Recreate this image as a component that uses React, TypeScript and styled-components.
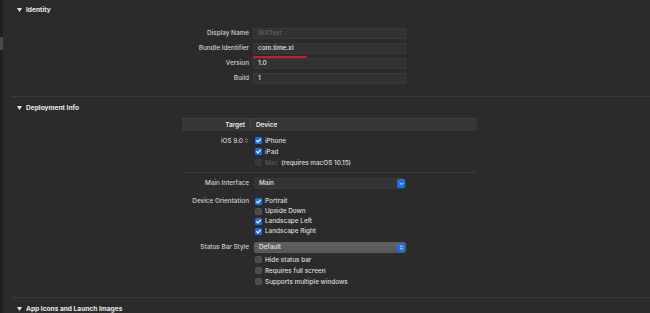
import styled, { createGlobalStyle } from 'styled-components';

const GlobalStyle = createGlobalStyle`
  html, body {
    margin: 0;
    padding: 0;
    background: #2b2b2b;
  }
  body {
    font-family: Inter, "Liberation Sans", sans-serif;
    font-size: 6.4px;
    color: #d6d6d6;
  }
`;

type CheckItem = { label: string; checked?: boolean; disabled?: boolean; note?: string };

const iosDevices: CheckItem[] = [
  { label: 'iPhone', checked: true },
  { label: 'iPad', checked: true },
  { label: 'Mac', disabled: true, note: '(requires macOS 10.15)' },
];

const orientations: CheckItem[] = [
  { label: 'Portrait', checked: true },
  { label: 'Upside Down' },
  { label: 'Landscape Left', checked: true },
  { label: 'Landscape Right', checked: true },
];

const statusBarOptions: CheckItem[] = [
  { label: 'Hide status bar' },
  { label: 'Requires full screen' },
  { label: 'Supports multiple windows' },
];

const Disclosure = () => (
  <svg width="5" height="4" viewBox="0 0 10 8">
    <polygon points="0,0 10,0 5,8" fill="#e4e4e4" />
  </svg>
);

const Tick = () => (
  <svg width="7" height="7" viewBox="0 0 7 7">
    <path d="M1.6 3.6 L2.9 4.9 L5.4 2.1" stroke="#fff" strokeWidth="1.1" fill="none" strokeLinecap="round" strokeLinejoin="round" />
  </svg>
);

const ChevronDown = () => (
  <svg width="5" height="4" viewBox="0 0 5 4">
    <path d="M1 1.2 L2.5 2.7 L4 1.2" stroke="#fff" strokeWidth="0.9" fill="none" strokeLinecap="round" />
  </svg>
);

const Stepper = ({ color = '#fff' }: { color?: string }) => (
  <svg width="5" height="7" viewBox="0 0 5 7">
    <path d="M1.3 2.8 L2.5 1.6 L3.7 2.8 M1.3 4.2 L2.5 5.4 L3.7 4.2" stroke={color} strokeWidth="0.8" fill="none" strokeLinecap="round" />
  </svg>
);

const Checks: React.FC<{ items: CheckItem[]; rowHeight: number }> = ({ items, rowHeight }) => (
  <CheckStack>
    {items.map((item) => (
      <CheckRow key={item.label} $h={rowHeight}>
        <CheckBox $checked={!!item.checked} $disabled={!!item.disabled}>
          {item.checked && <Tick />}
        </CheckBox>
        <CheckLabel $disabled={!!item.disabled}>{item.label}</CheckLabel>
        {item.note && <CheckLabel>{item.note}</CheckLabel>}
      </CheckRow>
    ))}
  </CheckStack>
);

export default function App() {
  return (
    <>
      <GlobalStyle />
      <Page>
        <Rail>
          <RailKnob />
        </Rail>
        <Content>
          <SectionHeader $first>
            <Disclosure />
            Identity
          </SectionHeader>
          <IdentityGrid>
            <Label>Display Name</Label>
            <TextField $dim>WXTest</TextField>
            <Label>Bundle Identifier</Label>
            <TextField>
              com.time.xl
              <Underline />
            </TextField>
            <Label>Version</Label>
            <TextField>1.0</TextField>
            <Label>Build</Label>
            <TextField>1</TextField>
          </IdentityGrid>
          <Divider />

          <SectionHeader>
            <Disclosure />
            Deployment Info
          </SectionHeader>
          <TargetTable>
            <TableHead>
              <HeadCell $label>Target</HeadCell>
              <HeadCell>Device</HeadCell>
            </TableHead>
            <TableBody>
              <BodyLabel>
                iOS 9.0
                <Stepper color="#9a9a9a" />
              </BodyLabel>
              <DeviceCell>
                <Checks items={iosDevices} rowHeight={11} />
              </DeviceCell>
            </TableBody>
          </TargetTable>

          <FormRow $top={5}>
            <Label>Main Interface</Label>
            <PopUp>
              <PopUpText>Main</PopUpText>
              <PopUpButton>
                <ChevronDown />
              </PopUpButton>
            </PopUp>
          </FormRow>
          <FormRow $top={7}>
            <Label $line={10}>Device Orientation</Label>
            <Checks items={orientations} rowHeight={10} />
          </FormRow>
          <FormRow $top={6} $bottom={10}>
            <Label>Status Bar Style</Label>
            <div>
              <PopUp $raised>
                <PopUpText>Default</PopUpText>
                <PopUpButton>
                  <Stepper />
                </PopUpButton>
              </PopUp>
              <Spacer />
              <Checks items={statusBarOptions} rowHeight={11} />
            </div>
          </FormRow>
          <Divider />

          <SectionHeader>
            <Disclosure />
            App Icons and Launch Images
          </SectionHeader>
        </Content>
      </Page>
    </>
  );
}

const Page = styled.div`
  display: flex;
  width: 650px;
  height: 313px;
  overflow: hidden;
  background: #2b2b2b;
`;

const Rail = styled.div`
  flex: none;
  width: 3px;
  background: #1f1f1f;
  display: flex;
  flex-direction: column;
`;

const RailKnob = styled.div`
  margin-top: 37px;
  height: 13px;
  background: #4a4a4a;
`;

const Content = styled.div`
  flex: 1;
  display: flex;
  flex-direction: column;
`;

const SectionHeader = styled.div<{ $first?: boolean }>`
  flex: none;
  display: flex;
  align-items: center;
  gap: 4px;
  height: ${(p) => (p.$first ? 19 : 21)}px;
  padding-left: 14px;
  font-size: 6.6px;
  font-weight: 700;
  color: #e8e8e8;
`;

const Divider = styled.div`
  flex: none;
  height: 1px;
  margin-left: 9px;
  background: #3a3a3a;
`;

const IdentityGrid = styled.div`
  display: grid;
  grid-template-columns: 246px 153px;
  grid-auto-rows: 11px;
  column-gap: 4px;
  row-gap: 4px;
  align-items: center;
  padding: 9px 0 12px;
`;

const Label = styled.div<{ $line?: number }>`
  text-align: right;
  white-space: nowrap;
  font-weight: 500;
  color: #d0d0d0;
  line-height: ${(p) => p.$line ?? 11}px;
  align-self: start;
`;

const TextField = styled.div<{ $dim?: boolean }>`
  position: relative;
  box-sizing: border-box;
  height: 11px;
  padding-left: 4px;
  line-height: 9px;
  background: #323232;
  border: 1px solid #393939;
  color: ${(p) => (p.$dim ? '#666' : '#e4e4e4')};
  font-weight: 500;
`;

const Underline = styled.span`
  position: absolute;
  left: -1px;
  top: 12px;
  width: 54px;
  height: 2px;
  border-radius: 1px;
  background: #c3202a;
`;

const TargetTable = styled.div`
  margin-left: 179px;
  width: 295px;
  border-bottom: 1px solid #3b3b3b;
`;

const TableHead = styled.div`
  display: grid;
  grid-template-columns: 69px 1fr;
  box-sizing: border-box;
  height: 13px;
  background: #363636;
  border-top: 1px solid #3f3f3f;
  font-weight: 600;
  color: #e8e8e8;
`;

const HeadCell = styled.div<{ $label?: boolean }>`
  display: flex;
  align-items: center;
  justify-content: ${(p) => (p.$label ? 'flex-end' : 'flex-start')};
  padding: ${(p) => (p.$label ? '0 5px 0 0' : '0 0 0 5px')};
  border-right: ${(p) => (p.$label ? '1px solid #474747' : 'none')};
`;

const TableBody = styled.div`
  display: grid;
  grid-template-columns: 69px 1fr;
  padding: 4px 0;
`;

const BodyLabel = styled.div`
  display: flex;
  align-items: center;
  justify-content: flex-end;
  gap: 1px;
  height: 11px;
  padding-right: 2px;
  font-weight: 500;
  color: #d0d0d0;
`;

const DeviceCell = styled.div`
  padding-left: 3px;
`;

const FormRow = styled.div<{ $top: number; $bottom?: number }>`
  display: grid;
  grid-template-columns: 246px 152px;
  column-gap: 5px;
  margin-top: ${(p) => p.$top}px;
  margin-bottom: ${(p) => p.$bottom ?? 0}px;
`;

const PopUp = styled.div<{ $raised?: boolean }>`
  display: flex;
  box-sizing: border-box;
  height: 11px;
  border-radius: 2px;
  background: ${(p) => (p.$raised ? 'linear-gradient(#626262, #575757)' : '#343434')};
  border: 1px solid ${(p) => (p.$raised ? '#5c5c5c' : '#393939')};
  overflow: hidden;
`;

const PopUpText = styled.div`
  flex: 1;
  padding-left: 4px;
  line-height: 9px;
  font-weight: 500;
  color: #e2e2e2;
`;

const PopUpButton = styled.div`
  flex: none;
  width: 8px;
  display: flex;
  align-items: center;
  justify-content: center;
  background: #1f6fe2;
  border-radius: 2px;
`;

const Spacer = styled.div`
  height: 1px;
`;

const CheckStack = styled.div`
  display: flex;
  flex-direction: column;
  padding-left: 1px;
`;

const CheckRow = styled.div<{ $h: number }>`
  display: flex;
  align-items: center;
  gap: 3px;
  height: ${(p) => p.$h}px;
  white-space: nowrap;
`;

const CheckBox = styled.span<{ $checked: boolean; $disabled: boolean }>`
  flex: none;
  display: flex;
  align-items: center;
  justify-content: center;
  box-sizing: border-box;
  width: 7px;
  height: 7px;
  border-radius: 1.5px;
  background: ${(p) => (p.$checked ? '#1f6fe2' : p.$disabled ? '#383838' : '#4a4a4a')};
  border: ${(p) => (p.$checked ? 'none' : `1px solid ${p.$disabled ? '#3d3d3d' : '#555'}`)};
`;

const CheckLabel = styled.span<{ $disabled?: boolean }>`
  font-weight: 500;
  color: ${(p) => (p.$disabled ? '#5c5c5c' : '#dcdcdc')};
`;
